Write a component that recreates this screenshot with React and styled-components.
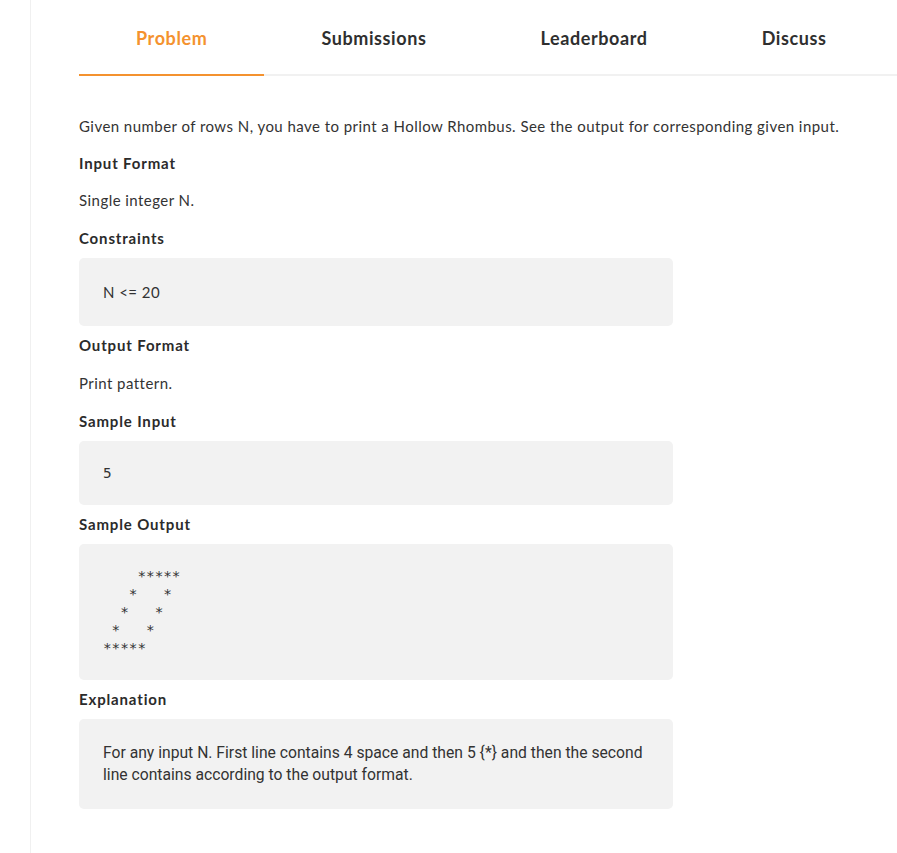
import React from "react";
import styled, { createGlobalStyle } from "styled-components";

const GlobalStyle = createGlobalStyle`
  html, body {
    margin: 0;
    padding: 0;
    background: #ffffff;
  }
  body {
    font-family: Lato, "Noto Sans", Arial, sans-serif;
    color: #333333;
  }
`;

const Page = styled.div`
  display: flex;
  min-height: 853px;
`;

const Sidebar = styled.aside`
  width: 30px;
  flex: 0 0 30px;
  border-right: 1px solid #f0f0f0;
`;

const Main = styled.main`
  flex: 1;
  padding-left: 48px;
  min-width: 0;
`;

const TabBar = styled.nav`
  display: flex;
  border-bottom: 2px solid #f1f1f1;
`;

const Tab = styled.div`
  padding: 27px 57px 25px;
  margin-bottom: -2px;
  border-bottom: 2px solid ${(p) => (p.$active ? "#f4922f" : "transparent")};
  color: ${(p) => (p.$active ? "#f4922f" : "#2f2f2f")};
  font-size: 18px;
  letter-spacing: 0.6px;
  font-weight: 700;
  line-height: 22px;
  white-space: nowrap;
  cursor: pointer;
`;

const Content = styled.div`
  display: flex;
  flex-direction: column;
  align-items: flex-start;
  padding-top: 39px;
  width: 800px;
`;

const Para = styled.p`
  margin: 0;
  font-size: 15px;
  letter-spacing: 0.45px;
  line-height: 22px;
  color: #333333;
`;

const headingGap = { para: "15px", body: "16px", box: "8px" };

const Heading = styled.h4`
  margin: ${(p) => headingGap[p.$after || "para"]} 0 0;
  font-size: 15px;
  letter-spacing: 0.85px;
  line-height: 22px;
  font-weight: 700;
  color: #2b2b2b;
`;

const Body = styled(Para)`
  margin-top: ${(p) => (p.$afterBox ? "16px" : "15px")};
`;

const Box = styled.div`
  width: 594px;
  box-sizing: border-box;
  margin-top: 9px;
  padding: 23px 24px;
  background: #f2f2f2;
  border-radius: 5px;
`;

const BoxText = styled.div`
  font-size: 15px;
  letter-spacing: 0.45px;
  line-height: 22px;
  color: #333333;
`;

const Code = styled.pre`
  margin: 0;
  font-family: "DejaVu Sans Mono", "Liberation Mono", monospace;
  font-size: 14.3px;
  line-height: 18px;
  color: #333333;
`;

const Explain = styled.div`
  font-family: Roboto, "Noto Sans", sans-serif;
  font-size: 15.7px;
  line-height: 22px;
  color: #333333;
`;

const tabs = ["Problem", "Submissions", "Leaderboard", "Discuss"];

const pattern = ["    *****", "   *   *", "  *   *", " *   *", "*****"].join("\n");

export default function App() {
  return (
    <>
      <GlobalStyle />
      <Page>
        <Sidebar />
        <Main>
          <TabBar>
            {tabs.map((t, i) => (
              <Tab key={t} $active={i === 0}>
                {t}
              </Tab>
            ))}
          </TabBar>
          <Content>
            <Para>
              Given number of rows N, you have to print a Hollow Rhombus. See the output for
              corresponding given input.
            </Para>
            <Heading>Input Format</Heading>
            <Body>Single integer N.</Body>
            <Heading $after="body">Constraints</Heading>
            <Box>
              <BoxText>N &lt;= 20</BoxText>
            </Box>
            <Heading $after="box">Output Format</Heading>
            <Body $afterBox>Print pattern.</Body>
            <Heading $after="body">Sample Input</Heading>
            <Box>
              <Code>5</Code>
            </Box>
            <Heading $after="box">Sample Output</Heading>
            <Box>
              <Code>{pattern}</Code>
            </Box>
            <Heading $after="box">Explanation</Heading>
            <Box>
              <Explain>
                For any input N. First line contains 4 space and then 5 {"{*}"} and then the second
                line contains according to the output format.
              </Explain>
            </Box>
          </Content>
        </Main>
      </Page>
    </>
  );
}
